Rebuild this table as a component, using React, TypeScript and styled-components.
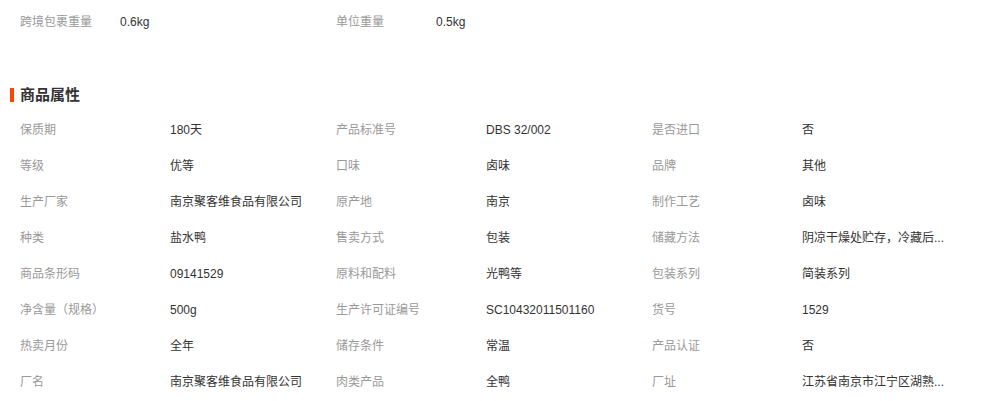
import styled, { createGlobalStyle } from "styled-components";

const GlobalStyle = createGlobalStyle`
  body {
    margin: 0;
    background: #fff;
    font-family: "Microsoft YaHei", Tahoma, "Liberation Sans", "Noto Sans CJK SC", sans-serif;
    font-size: 12px;
  }
`;

const Wrapper = styled.div`
  padding: 4px 10px 0 10px;
`;

const Grid = styled.div`
  display: grid;
  grid-template-columns: repeat(3, 316px);
  padding-left: 10px;
`;

const Cell = styled.div`
  display: flex;
  height: 36px;
  line-height: 36px;
  white-space: nowrap;
`;

const Label = styled.span<{ $w: number }>`
  width: ${(p) => p.$w}px;
  flex-shrink: 0;
  color: #999;
`;

const Value = styled.span`
  color: #333;
`;

const Title = styled.h3`
  margin: 37px 0 0 0;
  height: 35px;
  line-height: 35px;
  display: flex;
  align-items: center;
  font-size: 15px;
  font-weight: bold;
  color: #333;

  &::before {
    content: "";
    display: block;
    width: 4px;
    height: 14px;
    background: #ff4400;
    margin-right: 6px;
  }
`;

const weights: [string, string][] = [
  ["跨境包裹重量", "0.6kg"],
  ["单位重量", "0.5kg"],
];

// long values are shown already shortened, as on the product page
const attrs: [string, string][] = [
  ["保质期", "180天"],
  ["产品标准号", "DBS 32/002"],
  ["是否进口", "否"],
  ["等级", "优等"],
  ["口味", "卤味"],
  ["品牌", "其他"],
  ["生产厂家", "南京聚客维食品有限公司"],
  ["原产地", "南京"],
  ["制作工艺", "卤味"],
  ["种类", "盐水鸭"],
  ["售卖方式", "包装"],
  ["储藏方法", "阴凉干燥处贮存，冷藏后..."],
  ["商品条形码", "09141529"],
  ["原料和配料", "光鸭等"],
  ["包装系列", "简装系列"],
  ["净含量（规格）", "500g"],
  ["生产许可证编号", "SC10432011501160"],
  ["货号", "1529"],
  ["热卖月份", "全年"],
  ["储存条件", "常温"],
  ["产品认证", "否"],
  ["厂名", "南京聚客维食品有限公司"],
  ["肉类产品", "全鸭"],
  ["厂址", "江苏省南京市江宁区湖熟..."],
];

export default function App() {
  return (
    <Wrapper>
      <GlobalStyle />
      <Grid>
        {weights.map(([k, v]) => (
          <Cell key={k}>
            <Label $w={100}>{k}</Label>
            <Value>{v}</Value>
          </Cell>
        ))}
      </Grid>
      <Title>商品属性</Title>
      <Grid>
        {attrs.map(([k, v]) => (
          <Cell key={k}>
            <Label $w={150}>{k}</Label>
            <Value>{v}</Value>
          </Cell>
        ))}
      </Grid>
    </Wrapper>
  );
}
